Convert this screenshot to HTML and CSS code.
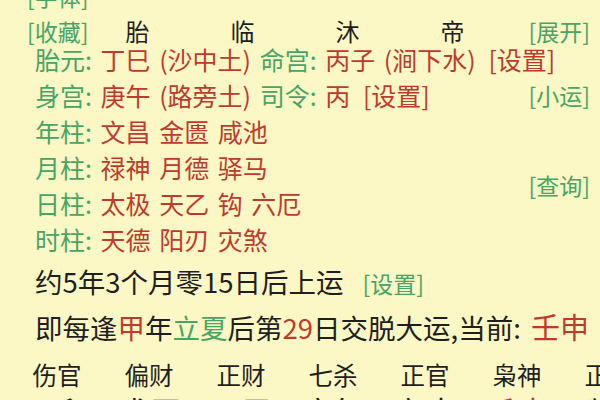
FILE: index.html
```html
<!doctype html>
<html lang="zh-CN">
<head>
  <meta charset="utf-8">
  <title>排盘 · 胎元命宫</title>
  <meta name="viewport" content="width=device-width,initial-scale=1">
  <link rel="stylesheet" href="styles.css">
</head>
<body>
  <main class="chart">
    <div class="cut">[字体]</div>

    <!-- 长生 -->
    <div class="head">
      <span class="link">[收藏]</span>
      <span class="t">胎</span>
      <span class="t">临</span>
      <span class="t">沐</span>
      <span class="t">帝</span>
      <span class="link end">[展开]</span>
    </div>

    <!-- 胎元 / 命宫 / 神煞 -->
    <div class="info">
      <div class="rows">
        <p class="row"><span class="g">胎元:</span> <span class="r">丁巳 (沙中土)</span> <span class="g">命宫:</span> <span class="r">丙子 (涧下水)</span> <span class="r set">[设置]</span></p>
        <p class="row"><span class="g">身宫:</span> <span class="r">庚午 (路旁土)</span> <span class="g">司令:</span> <span class="r">丙</span> <span class="r set">[设置]</span></p>
        <p class="row"><span class="g">年柱:</span> <span class="r">文昌 金匮 咸池</span></p>
        <p class="row"><span class="g">月柱:</span> <span class="r">禄神 月德 驿马</span></p>
        <p class="row"><span class="g">日柱:</span> <span class="r">太极 天乙 钩 六厄</span></p>
        <p class="row"><span class="g">时柱:</span> <span class="r">天德 阳刃 灾煞</span></p>
      </div>
      <div class="side">
        <span class="link xy">[小运]</span>
        <span class="link cx">[查询]</span>
      </div>
    </div>

    <!-- 大运 -->
    <p class="start">约5年3个月零15日后上运<span class="link gap">[设置]</span></p>
    <p class="swap">即每逢<span class="r">甲</span>年<span class="g">立夏</span>后第<span class="r">29</span>日交脱大运,当前: <span class="r now">壬申</span></p>

    <div class="gods">
      <span>伤官</span><span>偏财</span><span>正财</span><span>七杀</span><span>正官</span><span>枭神</span><span>正印</span>
    </div>
    <div class="dayun">
      <span>丁卯</span><span>戊辰</span><span>己巳</span><span>庚午</span><span>辛未</span><span class="r">壬申</span><span>癸酉</span>
    </div>
  </main>
</body>
</html>
```

FILE: styles.css
```css
/* ---------- Tokens ---------- */
:root{
  --bg:#fbf8c5;
  --green:#47a566;
  --red:#bf3a2d;
  --ink:#1f1f1f;
  --row:36px;
}

/* ---------- Reset ---------- */
*,*::before,*::after{box-sizing:border-box}
body{margin:0;width:600px;height:400px;overflow:hidden;
     background:var(--bg);color:var(--ink);
     font-family:"Noto Sans CJK SC","Noto Sans",sans-serif}
p{margin:0}

.g{color:var(--green)}
.r{color:var(--red)}
.link{color:var(--green);font-size:23px;white-space:nowrap}

/* ---------- Top ---------- */
.cut{margin:-17px 0 0 27px;font-size:23px;line-height:26px;color:var(--green)}

.head{
  display:grid;
  grid-template-columns:58px repeat(4,105px) 1fr;
  align-items:center;
  height:28px;
  margin-top:4px;
  padding:0 10px 0 27px;
  font-size:24px;
}
.head .t{text-align:center}
.head .end{justify-self:end}

/* ---------- Info rows ---------- */
.info{display:grid;grid-template-columns:minmax(0,1fr) auto;padding:0 10px 0 35px}
.row{font-size:25px;line-height:var(--row);word-spacing:3px;white-space:nowrap}
.set{margin-left:4px}

.side{display:flex;flex-direction:column;align-items:flex-end}
.side .link{line-height:var(--row)}
.side .xy{margin-top:var(--row)}
.side .cx{margin-top:54px}

/* ---------- Luck ---------- */
.start{margin-top:6px;padding-left:35px;font-size:27.5px;line-height:var(--row);white-space:nowrap}
.start .gap{margin-left:19px}

.swap{margin-top:7px;padding-left:35px;font-size:27.5px;line-height:var(--row);white-space:nowrap}
.swap .now{font-size:29px;margin-left:4px}

.gods,.dayun{display:grid;grid-template-columns:repeat(7,92px);padding-left:11px;text-align:center;white-space:nowrap}
.gods{margin-top:12px;font-size:24.5px;line-height:var(--row)}
.dayun{margin-top:-2px;font-size:32px;line-height:40px}
```
